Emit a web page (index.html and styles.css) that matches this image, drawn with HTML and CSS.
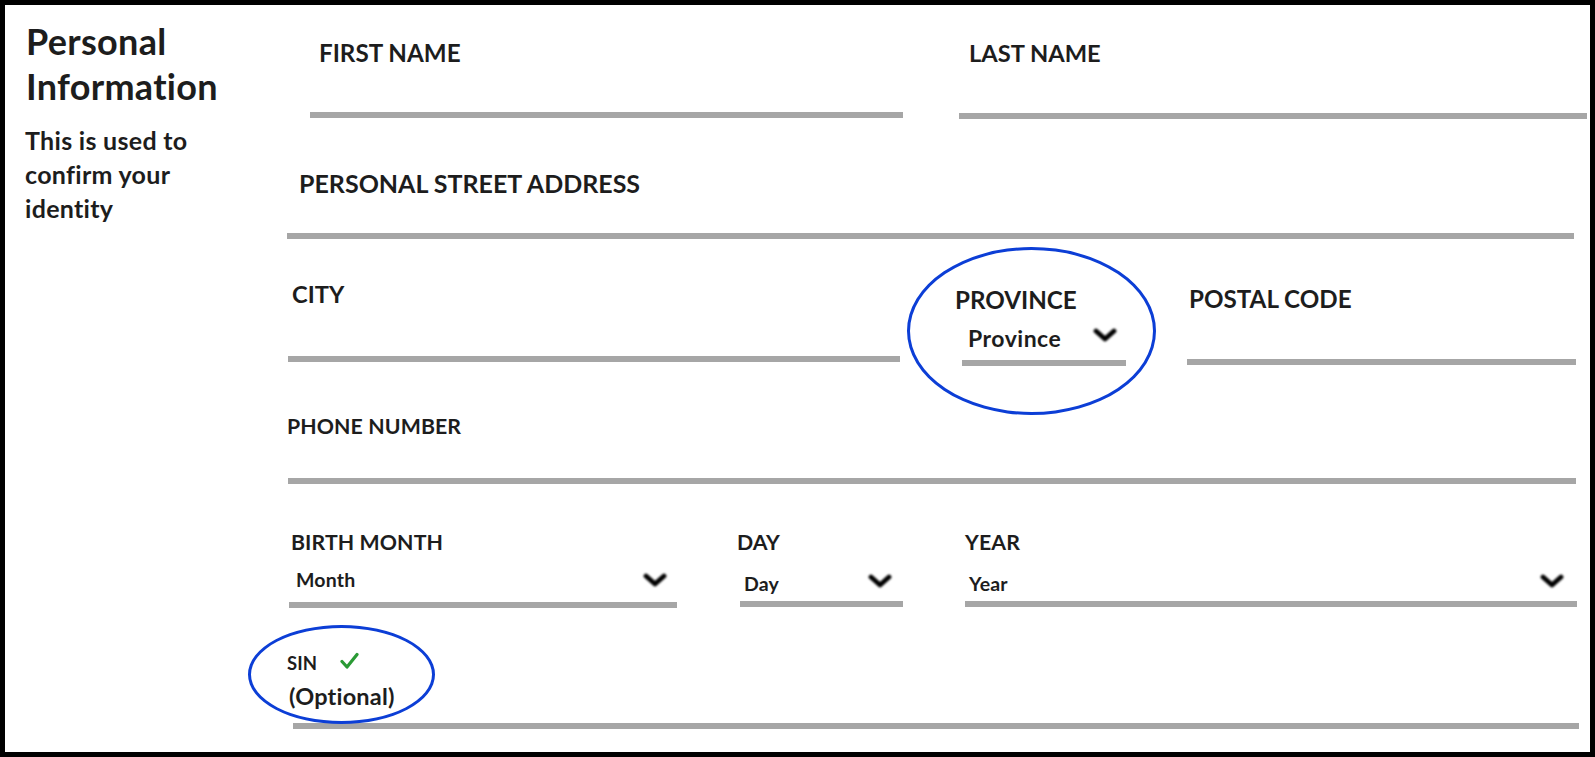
FILE: index.html
```html
<!DOCTYPE html>
<html lang="en">
<head>
<meta charset="utf-8">
<title>Personal Information</title>
<link rel="stylesheet" href="styles.css">
</head>
<body>
<div class="frame">
  <aside class="intro">
    <h1 class="title">Personal<br>Information</h1>
    <p class="lede">This is used to<br>confirm your<br>identity</p>
  </aside>

  <form class="form">
    <div class="row row-names">
      <div class="field f-first">
        <span class="label">FIRST NAME</span>
        <div class="bar"></div>
      </div>
      <div class="field f-last">
        <span class="label">LAST NAME</span>
        <div class="bar"></div>
      </div>
    </div>

    <div class="row row-street">
      <div class="field f-street">
        <span class="label">PERSONAL STREET ADDRESS</span>
        <div class="bar"></div>
      </div>
    </div>

    <div class="row row-city">
      <div class="field f-city">
        <span class="label">CITY</span>
        <div class="bar"></div>
      </div>
      <div class="field f-province">
        <span class="ring ring-province"></span>
        <span class="label">PROVINCE</span>
        <div class="select">
          <span class="value value-lg">Province</span>
          <svg class="chev" viewBox="0 0 24 14" width="24" height="14"><polyline points="3,3 12,11 21,3" /></svg>
        </div>
        <div class="bar"></div>
      </div>
      <div class="field f-postal">
        <span class="label">POSTAL CODE</span>
        <div class="bar"></div>
      </div>
    </div>

    <div class="row row-phone">
      <div class="field f-phone">
        <span class="label label-md">PHONE NUMBER</span>
        <div class="bar"></div>
      </div>
    </div>

    <div class="row row-birth">
      <div class="field f-month">
        <span class="label label-md">BIRTH MONTH</span>
        <div class="select">
          <span class="value">Month</span>
          <svg class="chev" viewBox="0 0 24 14" width="24" height="14"><polyline points="3,3 12,11 21,3" /></svg>
        </div>
        <div class="bar"></div>
      </div>
      <div class="field f-day">
        <span class="label label-md">DAY</span>
        <div class="select">
          <span class="value">Day</span>
          <svg class="chev" viewBox="0 0 24 14" width="24" height="14"><polyline points="3,3 12,11 21,3" /></svg>
        </div>
        <div class="bar"></div>
      </div>
      <div class="field f-year">
        <span class="label label-md">YEAR</span>
        <div class="select">
          <span class="value">Year</span>
          <svg class="chev" viewBox="0 0 24 14" width="24" height="14"><polyline points="3,3 12,11 21,3" /></svg>
        </div>
        <div class="bar"></div>
      </div>
    </div>

    <div class="row row-sin">
      <div class="field f-sin">
        <span class="ring ring-sin"></span>
        <div class="sin-head">
          <span class="label label-sm">SIN</span>
          <svg class="check" viewBox="0 0 20 20" width="20" height="20"><path d="M3 10.5 L8 16 L18 3.5" /></svg>
        </div>
        <span class="optional">(Optional)</span>
        <div class="bar"></div>
      </div>
    </div>
  </form>
</div>
</body>
</html>
```

FILE: styles.css
```css
* { box-sizing: border-box; }

body {
  margin: 0;
  background: #fff;
  font-family: Lato, "Open Sans", sans-serif;
  color: #1d1d1d;
}

.frame {
  width: 1595px;
  height: 757px;
  border: 5px solid #000;
  background: #fff;
  display: flex;
}

/* left column */
.intro {
  flex: none;
  width: 282px;
  padding: 14px 0 0 21px;
}
.title {
  margin: 0;
  font-size: 36px;
  line-height: 45px;
  font-weight: 700;
  letter-spacing: 0.3px;
}
.lede {
  margin: 14px 0 0 -1px;
  font-size: 25px;
  line-height: 34px;
  font-weight: 700;
  letter-spacing: 0.3px;
}

/* form */
.form {
  flex: 1;
  display: flex;
  flex-direction: column;
}
.row {
  display: flex;
  flex: none;
}
.field {
  flex: none;
  display: flex;
  flex-direction: column;
  position: relative;
}
.label {
  display: block;
  font-size: 24.2px;
  line-height: 30px;
  font-weight: 700;
}
.label-md {
  font-size: 21.3px;
  letter-spacing: 0.1px;
}
.bar {
  height: 6px;
  background: #a6a6a6;
  margin-top: auto;
}

.select {
  display: flex;
  align-items: center;
  justify-content: space-between;
}
.value {
  font-size: 19.5px;
  line-height: 24px;
  font-weight: 700;
  letter-spacing: 0.2px;
}
.value-lg {
  font-size: 23px;
  line-height: 28px;
  letter-spacing: 0.5px;
}
.chev {
  flex: none;
  filter: blur(0.8px);
}
.chev polyline {
  fill: none;
  stroke: #000;
  stroke-width: 4.8;
  stroke-linecap: round;
  stroke-linejoin: round;
}

.ring {
  position: absolute;
  border: 3px solid #0c3ed6;
  border-radius: 50%;
  pointer-events: none;
}

/* row 1 */
.row-names { height: 113px; padding-top: 33px; }
.f-first { margin-left: 23px; width: 593px; }
.f-first .label { padding-left: 9px; }
.f-last { margin-left: 56px; width: 628px; }
.f-last .label { padding-left: 10px; font-size: 23.7px; }
.f-last .bar { margin-bottom: -1px; }

/* row 2 */
.row-street { height: 121px; padding-top: 50px; }
.f-street { width: 1287px; }
.f-street .label { padding-left: 12px; font-size: 25px; }

/* row 3 */
.row-city { height: 127px; padding-top: 40px; }
.f-city { margin-left: 1px; width: 612px; }
.f-city .label { padding-left: 4px; font-size: 23.7px; }
.f-city .bar { margin-bottom: 4px; }
.f-province { margin-left: 55px; width: 171px; }
.f-province .label { margin-top: 6px; }
.f-province .select { margin: 9px 9px 0 13px; }
.f-province .chev { margin-top: -6px; }
.f-province .bar { margin-left: 7px; }
.ring-province { left: -48px; top: -32px; width: 249px; height: 168px; }
.f-postal { margin-left: 61px; width: 389px; }
.f-postal .label { margin-top: 5px; padding-left: 2px; }
.f-postal .bar { margin-bottom: 1px; }

/* row 4 */
.row-phone { height: 118px; padding-top: 45px; }
.f-phone { width: 1289px; }
.f-phone .bar { margin-left: 1px; }

/* row 5 */
.row-birth { height: 124px; padding-top: 43px; }
.f-month { margin-left: 2px; width: 388px; }
.f-month .label { padding-left: 2px; }
.f-month .select { margin: 11px 10px 0 7px; }
.f-day { margin-left: 60px; width: 166px; }
.f-day .select { margin: 15px 11px 0 7px; }
.f-day .chev { margin-top: -6px; }
.f-day .bar { margin-left: 3px; margin-bottom: 1px; }
.f-year { margin-left: 62px; width: 612px; }
.f-year .select { margin: 15px 13px 0 4px; }
.f-year .chev { margin-top: -6px; }
.f-year .bar { margin-bottom: 1px; }

/* row 6 */
.row-sin { height: 121px; padding-top: 43px; }
.f-sin { width: 1292px; }
.sin-head {
  display: flex;
  align-items: center;
  gap: 22px;
}
.label-sm {
  font-size: 18.5px;
  line-height: 24px;
}
.check { flex: none; margin-top: -4px; }
.check path {
  fill: none;
  stroke: #2a9a35;
  stroke-width: 3.2;
  stroke-linecap: round;
  stroke-linejoin: round;
}
.optional {
  display: block;
  margin-top: 7px;
  padding-left: 2px;
  font-size: 23.5px;
  line-height: 28px;
  font-weight: 700;
  letter-spacing: 0.2px;
}
.f-sin .bar { margin-left: 6px; }
.ring-sin { left: -39px; top: -26px; width: 187px; height: 99px; }
```
